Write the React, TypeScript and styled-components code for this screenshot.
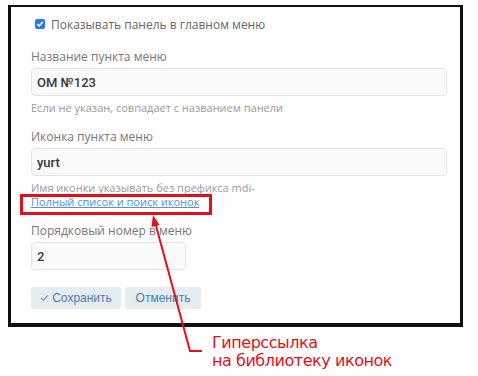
import styled, { createGlobalStyle } from 'styled-components';

const GlobalStyle = createGlobalStyle`
  html, body {
    margin: 0;
    padding: 0;
    background: #ffffff;
  }
  body {
    font-family: 'Open Sans', 'Noto Sans', sans-serif;
  }
`;

const Stage = styled.div`
  position: relative;
  width: 478px;
  height: 376px;
  overflow: hidden;
  background: #fff;
`;

const Frame = styled.div`
  margin: 5px 0 0 8px;
  width: 455px;
  height: 322px;
  box-sizing: border-box;
  border: 3px solid #111;
  border-top-width: 2px;
  border-bottom-width: 4px;
  padding: 8px 13px 0 20px;
`;

const CheckRow = styled.label`
  display: flex;
  align-items: center;
  gap: 6px;
  height: 18px;
  padding-left: 4px;
  font-size: 12px;
  color: #666;
`;

const CheckBox = styled.span`
  width: 10px;
  height: 10px;
  border-radius: 2px;
  background: #2b7be0;
  display: flex;
  align-items: center;
  justify-content: center;
`;

const Field = styled.div<{ $first?: boolean }>`
  margin-top: ${(p) => (p.$first ? '15px' : '13px')};
`;

const FieldLabel = styled.div`
  font-size: 12px;
  line-height: 18px;
  color: #777;
  margin-bottom: 2px;
`;

const Input = styled.div<{ $width?: number }>`
  width: ${(p) => (p.$width ? `${p.$width}px` : '100%')};
  height: 28px;
  box-sizing: border-box;
  border: 1px solid #e2e4e7;
  border-radius: 4px;
  background: #fafafa;
  padding-left: 5px;
  display: flex;
  align-items: center;
  font-family: Roboto, 'Liberation Sans', Arial, sans-serif;
  font-size: 13px;
  font-weight: 500;
  color: #383838;
`;

const Help = styled.div`
  margin-top: 5px;
  font-size: 11px;
  line-height: 14px;
  color: #9a9a9a;
`;

const HelpLink = styled.a`
  display: block;
  font-size: 11px;
  line-height: 14px;
  color: #4a93dc;
  text-decoration: underline;
`;

const Buttons = styled.div`
  display: flex;
  gap: 4px;
  margin-top: 17px;
`;

const Button = styled.button<{ $width: number }>`
  width: ${(p) => p.$width}px;
  height: 22px;
  border: none;
  border-radius: 3px;
  background: #e5ecf2;
  color: #4f7eae;
  font-family: 'Liberation Sans', Arial, sans-serif;
  font-size: 12px;
  padding: 0;
  display: flex;
  align-items: center;
  justify-content: center;
  gap: 3px;
`;

const Note = styled.div`
  margin: 7px 0 0 212px;
  font-family: 'DejaVu Sans', Verdana, sans-serif;
  font-size: 16px;
  line-height: 18px;
  letter-spacing: -0.45px;
  color: #e3101a;
`;

const HighlightBox = styled.div`
  position: absolute;
  left: 20px;
  top: 194px;
  width: 192px;
  height: 21px;
  box-sizing: border-box;
  border: 3px solid #e3101a;
`;

const Arrow = styled.svg`
  position: absolute;
  left: 0;
  top: 0;
`;

export default function App() {
  return (
    <Stage>
      <GlobalStyle />
      <Frame>
        <CheckRow>
          <CheckBox>
            <svg width="8" height="8" viewBox="0 0 9 9">
              <path d="M1.5 4.6 L3.6 6.6 L7.6 2.2" fill="none" stroke="#fff" strokeWidth="1.7" />
            </svg>
          </CheckBox>
          Показывать панель в главном меню
        </CheckRow>
        <Field $first>
          <FieldLabel>Название пункта меню</FieldLabel>
          <Input>ОМ №123</Input>
          <Help>Если не указан, совпадает с названием панели</Help>
        </Field>
        <Field>
          <FieldLabel>Иконка пункта меню</FieldLabel>
          <Input>yurt</Input>
          <Help>Имя иконки указывать без префикса mdi-</Help>
          <HelpLink>Полный список и поиск иконок</HelpLink>
        </Field>
        <Field>
          <FieldLabel>Порядковый номер в меню</FieldLabel>
          <Input $width={155}>2</Input>
        </Field>
        <Buttons>
          <Button $width={90}>
            <svg width="9" height="8" viewBox="0 0 9 8">
              <path d="M1 4.2 L3.3 6.3 L8 1.4" fill="none" stroke="#6b8fb6" strokeWidth="1.1" />
            </svg>
            Сохранить
          </Button>
          <Button $width={76}>Отменить</Button>
        </Buttons>
      </Frame>
      <Note>
        Гиперссылка
        <br />
        на библиотеку иконок
      </Note>
      <HighlightBox />
      <Arrow width="478" height="376" viewBox="0 0 478 376">
        <polyline points="155,222 190,351 202,351" fill="none" stroke="#e3101a" strokeWidth="2" />
        <polygon points="153,215 159.5,225 151.5,227" fill="#e3101a" />
      </Arrow>
    </Stage>
  );
}
